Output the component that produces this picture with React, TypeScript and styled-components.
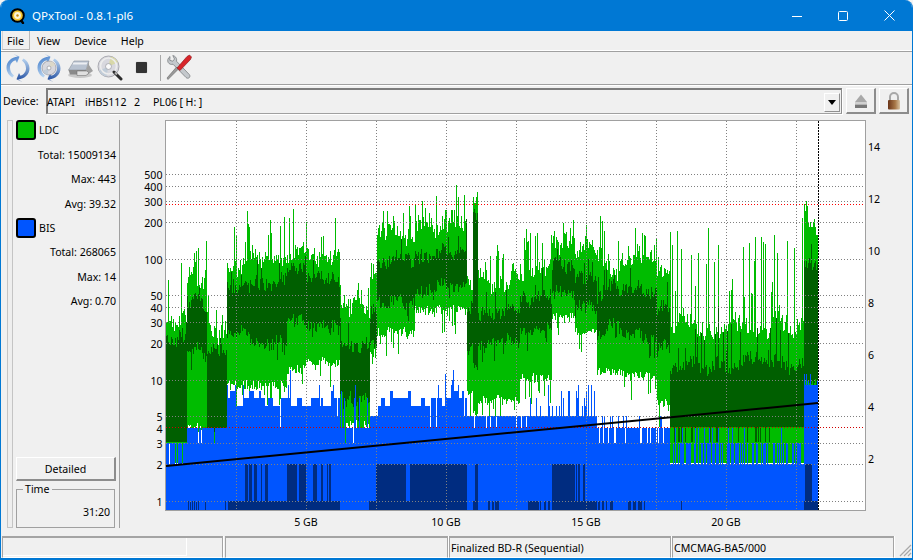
import React, { useMemo } from "react";
import styled, { createGlobalStyle } from "styled-components";

const Global = createGlobalStyle`
  html, body { margin: 0; padding: 0; background: #f4f4f4; overflow: hidden; }
  * { box-sizing: border-box; }
`;

const FONT = `"Noto Sans", "Liberation Sans", sans-serif`;

const Win = styled.div`
  width: 913px; height: 560px; display: flex; flex-direction: column;
  background: #f0f0f0; border: 1px solid #0078d4; border-top: 0; border-bottom-width: 2px;
  border-radius: 8px 8px 0 0; overflow: hidden;
  font: 10.6px/14px ${FONT}; color: #000;
`;
const TitleBar = styled.div`
  height: 31px; flex: none; background: #0078d4; display: flex; align-items: center; padding-left: 9px; color: #fff;
`;
const TitleText = styled.span` margin-left: 6px; font-size: 11.6px; flex: 1; `;
const WinBtn = styled.div` width: 46px; height: 31px; display: flex; align-items: center; justify-content: center; `;
const MenuBar = styled.div`
  height: 21px; flex: none; display: flex; padding-left: 1px; border-bottom: 1px solid #a0a0a0; box-shadow: inset 0 -1px 0 #fff; padding-bottom: 2px;
`;
const Menu = styled.div<{ $on?: boolean; $pr?: number }>`
  height: 19px; padding: 3px ${p => p.$pr ?? 6}px 0 ${p => (p.$on ? 4 : 6)}px; margin-right: ${p => (p.$on ? 1 : 0)}px;
  border: ${p => (p.$on ? "1px solid #d4d4d4" : "0")}; border-top: 0;
  border-right-color: #b8b8b8; border-bottom-color: #b8b8b8;
`;
const ToolBar = styled.div`
  height: 33px; flex: none; display: flex; align-items: center; padding: 0 0 1px 1px; border-bottom: 1px solid #a0a0a0;
`;
const ToolBtn = styled.div<{ $w?: number }>`
  width: ${p => p.$w ?? 31}px; height: 31px; display: flex; align-items: center; justify-content: center;
`;
const Sep = styled.div` width: 1px; height: 26px; background: #a8a8a8; margin: 0 2px 0 3px; `;
const DeviceRow = styled.div`
  height: 32px; flex: none; display: flex; gap: 3px; padding: 2px 3px 0 2px; border-top: 1px solid #fff;
`;
const DevLabel = styled.div` width: 40px; height: 25px; line-height: 27px; `;
const Combo = styled.div`
  width: 800px; margin-right: 1px; height: 26px; display: flex; align-items: center; justify-content: space-between;
  border-top: 2px solid #7c7c7c; border-left: 2px solid #7c7c7c; border-right: 1px solid #8c8c8c; border-bottom: 1px solid #a0a0a0;
  box-shadow: 1px 1px 0 #fff; padding: 1px 1px 0 0; white-space: pre;
`;
const ComboText = styled.span` margin-left: -1px; word-spacing: -0.2px; `;
const ComboArrow = styled.div`
  width: 16px; height: 19px; margin-top: 1px; display: flex; align-items: center; justify-content: center;
  border-top: 1px solid #fff; border-left: 1px solid #fff; border-right: 1px solid #909090; border-bottom: 1px solid #909090;
`;
const RaisedBtn = styled.div`
  width: 30px; height: 26px; display: flex; align-items: center; justify-content: center;
  border-top: 1px solid #fff; border-left: 1px solid #fff; border-right: 2px solid #8c8c8c; border-bottom: 2px solid #8c8c8c;
`;
const Main = styled.div` height: 419px; flex: none; display: flex; `;
const Side = styled.div` width: 119px; flex: none; display: flex; padding: 3px 0 8px 6px; `;
const Handle = styled.div` width: 6px; flex: none; border: 1px solid #c4c4c4; background: #eeeeee; `;
const Stats = styled.div`
  flex: 1; display: flex; flex-direction: column; padding: 0 3px 0 3px; border-right: 1px solid #a0a0a0;
`;
const Legend = styled.div<{ $mt?: number }>`
  height: 20px; display: flex; align-items: center; gap: 3px; margin-top: ${p => p.$mt ?? 0}px; margin-bottom: 2.7px;
`;
const Swatch = styled.div<{ $c: string }>`
  width: 20px; height: 20px; border-radius: 3px; border: 2px solid #000; background: ${p => p.$c};
`;
const StatRow = styled.div` height: 24.5px; line-height: 24.5px; text-align: right; `;
const Detailed = styled.div`
  margin-top: auto; height: 24px; width: 100px; display: flex; align-items: center; justify-content: center;
  border-top: 1px solid #fff; border-left: 1px solid #fff; border-right: 2px solid #8c8c8c; border-bottom: 2px solid #8c8c8c;
`;
const TimeBox = styled.fieldset`
  margin: 1px 0 0; padding: 0 4px 0 0; width: 99px; height: 46px; border: 1px solid #a0a0a0; text-align: right;
  font-family: inherit;
`;
const TimeLegend = styled.legend` margin-left: 6px; padding: 0 2px; text-align: left; line-height: 14px; `;
const TimeVal = styled.div` margin-top: 9px; `;
const ChartSvg = styled.svg` width: 792px; height: 419px; flex: none; display: block; `;
const StatusBar = styled.div` height: 22px; flex: none; display: flex; padding-left: 1px; `;
const Sunken = styled.div<{ $w: number; $ml?: number }>`
  width: ${p => p.$w}px; margin-left: ${p => p.$ml ?? 0}px; height: 22px; padding: 2px 0 0 1px; white-space: nowrap;
  border-top: 2px solid #a4a4a4; border-left: 1px solid #a4a4a4; border-right: 1px solid #a4a4a4; border-bottom: 1px solid #fff;
  line-height: 17px; display: flex; box-shadow: 1px 0 0 #fff;
`;
const Progress = styled.div` width: 184px; height: 18px; margin: -2px 0 0 -1px; border-right: 1px solid #fff; border-bottom: 1px solid #fff; `;
const Grip = styled.svg` margin: 6px 0 0 3px; width: 15px; height: 15px; flex: none; `;

/* ---------- chart data ---------- */
type Seg = [number, number, number, number, number, number, number];
// x end, green top, green bottom, dark top, dark bottom, blue value, spike
const SEGS: Seg[] = [
  [178, 322, 463, 342, 442, 3, 55],
  [187, 316, 463, 336, 442, 3, 70],
  [207, 272, 427, 303, 352, 4, 38],
  [227, 318, 440, 348, 432, 4, 35],
  [250, 262, 385, 288, 335, 7, 45],
  [287, 256, 385, 280, 340, 7, 45],
  [305, 244, 370, 268, 320, 7, 45],
  [340, 252, 362, 280, 328, 7, 32],
  [370, 308, 425, 346, 400, 4, 26],
  [377, 265, 350, 312, 346, 5, 28],
  [415, 233, 332, 262, 303, 7, 35],
  [467, 222, 310, 250, 285, 7, 35],
  [473, 282, 395, 308, 350, 5, 10],
  [478, 194, 412, 214, 365, 5, 5],
  [520, 278, 400, 312, 342, 5, 45],
  [552, 272, 378, 298, 332, 5, 38],
  [575, 243, 317, 263, 292, 5, 22],
  [597, 253, 333, 273, 303, 5, 22],
  [622, 260, 372, 295, 333, 4, 35],
  [657, 260, 376, 287, 333, 4, 26],
  [670, 273, 402, 305, 343, 4, 22],
  [804, 330, 463, 362, 427, 3, 105],
  [818, 226, 400, 265, 383, 10, 12],
];
const DB_MID: [number, number][] = [
  [245, 248], [249, 252], [254, 257], [261, 262], [265, 268], [287, 297], [299, 306], [313, 317], [321, 323], [327, 328], [329, 331],
  [376, 406], [410, 467], [475, 478], [552, 575], [576, 577], [578, 580], [583, 585], [805, 812],
];
const DB_LOW: [number, number][] = [
  [188, 189], [190, 191], [192, 193], [194, 195], [196, 197], [198, 199], [205, 206], [225, 226], [228, 340], [369, 467], [473, 478],
  [488, 490], [492, 494], [495, 499], [528, 539], [540, 541], [544, 546], [548, 550], [552, 597], [598, 600], [602, 604], [606, 607], [610, 613],
  [628, 631], [633, 636], [638, 642], [644, 645], [681, 682], [804, 818],
];
const yOf = (v: number) => Math.round(500.5 - 121 * Math.log10(v));

function buildChart() {
  let s = 1234567;
  const rnd = () => {
    s = (s + 0x6d2b79f5) | 0;
    let t = Math.imul(s ^ (s >>> 15), 1 | s);
    t = (t + Math.imul(t ^ (t >>> 7), 61 | t)) ^ t;
    return ((t ^ (t >>> 14)) >>> 0) / 4294967296;
  };
  const light: string[] = [], dark: string[] = [], blue: string[] = [], navy: string[] = [];
  let walkA = 0, walkB = 0, held = 7, hold = 0;
  for (let x = 166; x < 818; x++) {
    const seg = SEGS.find(g => x < g[0])!;
    const [, gT, gB, dT, dB, bv, spike] = seg;
    const wide = x >= 670 && x < 804;
    walkA = walkA * 0.88 + (rnd() - 0.5) * 9;
    walkB = walkB * 0.88 + (rnd() - 0.5) * 7;
    let top = gT + walkA + (rnd() - 0.5) * 16;
    if (rnd() < 0.2) top -= spike * (0.25 + 0.75 * rnd());
    let bot = gB + (rnd() - 0.5) * 10;
    if (rnd() < 0.22 && gB < 440) bot += rnd() * 26;
    let dTop = dT + walkB + (rnd() - 0.5) * 12;
    if (rnd() < (wide ? 0.14 : 0.12)) dTop -= (wide ? 75 : 26) * rnd();
    let dBot = dB + walkB * 0.8 + (rnd() - 0.5) * 12;
    if (rnd() < 0.12) dBot += 18 * rnd();
    if (gB >= 460) bot = x < 670 && rnd() < 0.3 ? 443 : 463;
    if (dB >= 427) dBot = rnd() < 0.22 ? 442 : dB;
    light.push(`M${x}.5 ${Math.round(top)}V${Math.round(bot)}`);
    dark.push(`M${x}.5 ${Math.round(Math.max(dTop, top))}V${Math.round(dBot)}`);
    let v = bv;
    const r = rnd();
    if (bv === 3 && x >= 670) {
      v = r < 0.45 ? 2 : r < 0.9 ? 3 : 4;
    } else if (bv === 3) {
      v = r < 0.2 ? 2 : 3;
    } else if (bv === 7) {
      if (hold <= 0) {
        const q = rnd();
        held = q < 0.28 ? 6 : q < 0.56 ? 7 : q < 0.74 ? 8 : q < 0.84 ? 9 : q < 0.9 ? 10 + Math.floor(rnd() * 3) : q < 0.96 ? 5 : 4;
        hold = held <= 5 || held >= 9 ? 1 : 1 + Math.floor(rnd() * 5);
      }
      hold--;
      v = held;
    } else if (bv === 5) {
      if (x >= 528 && x < 597) {
        if (r < 0.25) v = 6 + Math.floor(rnd() * 4);
      } else if (r < 0.1) v = 4;
    } else if (bv === 4) {
      if (x >= 597) {
        if (r < 0.14) v = 3;
        else if (r < 0.3) v = 5;
      } else if (r < 0.07) v = 3;
      if (x >= 340 && x < 370 && rnd() < 0.12) v = 6 + Math.floor(rnd() * 4);
    } else if (bv === 10) {
      v = r < 0.2 ? 11 : r < 0.5 ? 10 : 9;
    }
    blue.push(`M${x}.5 ${yOf(v)}V510`);
  }
  DB_MID.forEach(([a, b]) => { for (let x = a; x < b; x++) navy.push(`M${x}.5 464V501`); });
  DB_LOW.forEach(([a, b]) => { for (let x = a; x < b; x++) navy.push(`M${x}.5 501V510`); });
  return { light: light.join(""), dark: dark.join(""), blue: blue.join(""), navy: navy.join("") };
}

const GRID_V = [1, 2, 3, 5, 10, 20, 30, 40, 50, 100, 200, 300, 400, 500];
const LEFT_TICKS = [1, 2, 3, 4, 5, 10, 20, 30, 40, 50, 100, 200, 300, 400, 500];
const RIGHT_TICKS: [string, number][] = [["14", 147], ["12", 199], ["10", 251], ["8", 303], ["6", 355], ["4", 407], ["2", 459]];
const X_TICKS: [string, number][] = [["5 GB", 306], ["10 GB", 446], ["15 GB", 586], ["20 GB", 726]];
const V_LINES = [236, 306, 376, 446, 516, 586, 656, 726, 796];

const Chart = () => {
  const d = useMemo(buildChart, []);
  return (
    <ChartSvg viewBox="120 117 792 419">
      <rect x="165.5" y="120.5" width="700" height="390" fill="#fff" stroke="#a0a0a0" />
      <line x1="165" x2="866" y1="510.5" y2="510.5" stroke="#a0a0a0" />
      <g shapeRendering="crispEdges" fill="none" strokeWidth="1">
        <path d={d.light} stroke="#00bc00" />
        <path d={d.dark} stroke="#005f00" />
        <path d={d.blue} stroke="#0055ff" />
        <path d={d.navy} stroke="#002c80" />
        {GRID_V.map(v => (
          <line key={v} x1="166" x2="865" y1={yOf(v) + 0.5} y2={yOf(v) + 0.5} stroke="#808080" strokeDasharray="1 2" />
        ))}
        {V_LINES.map(x => (
          <line key={x} x1={x + 0.5} x2={x + 0.5} y1="121" y2="510" stroke="#808080" strokeDasharray="1 2" />
        ))}
        <line x1="166" x2="865" y1="204.5" y2="204.5" stroke="#ff0000" strokeDasharray="1 2" />
        <line x1="166" x2="865" y1="427.5" y2="427.5" stroke="#d00000" strokeDasharray="1 2" />
        <line x1="818.5" x2="818.5" y1="121" y2="510" stroke="#000" strokeDasharray="2 1" />
      </g>
      <line x1="166" y1="466" x2="818" y2="403" stroke="#000" strokeWidth="2" />
      <g fontFamily={FONT} fontSize="10.6" fill="#000">
        <g textAnchor="end">
          {LEFT_TICKS.map(v => (
            <text key={v} x="162.5" y={yOf(v) + 4.5}>{v}</text>
          ))}
        </g>
        {RIGHT_TICKS.map(([t, y]) => (
          <text key={t} x="868" y={y + 4}>{t}</text>
        ))}
        <g textAnchor="middle">
          {X_TICKS.map(([t, x]) => (
            <text key={t} x={x} y="526">{t}</text>
          ))}
        </g>
      </g>
    </ChartSvg>
  );
};

/* ---------- icons ---------- */
const AppIcon = () => (
  <svg width="16" height="16" viewBox="0 0 16 16">
    <path d="M10 11l3 4" stroke="#000" strokeWidth="2.4" strokeLinecap="round" />
    <circle cx="7.5" cy="7.5" r="6.3" fill="#f4c430" stroke="#000" strokeWidth="2" />
    <circle cx="7.5" cy="7.5" r="3.4" fill="#fff6d8" />
    <circle cx="7.5" cy="7.5" r="1.2" fill="#c88a10" />
  </svg>
);
const Arcs = () => (
  <>
    <path d="M13 2.5C6 3.2 1.5 8 1.5 13.5c0 4.5 2.6 8 6 10l1.5-2C6.300 19.500 5 16.800 5 13.500 5 10 7.500 7.200 10.500 6.300L12 9l2.500-6.300L8.500 0z" fill="url(#lb)" />
    <path d="M13 25.500c7-.7 11.500-5.500 11.500-11 0-4.500-2.600-8-6-10l-1.500 2c2.700 2 4 4.700 4 8 0 3.500-2.500 6.300-5.500 7.200L14 19l-2.500 6.300 6 2.700z" fill="url(#db)" />
  </>
);
const GradDefs = () => (
  <defs>
    <linearGradient id="lb" x1="0" y1="0" x2="0.3" y2="1">
      <stop offset="0" stopColor="#2f6fc4" />
      <stop offset="1" stopColor="#b8d4f0" />
    </linearGradient>
    <linearGradient id="db" x1="0.6" y1="0" x2="0.5" y2="1">
      <stop offset="0" stopColor="#b8d4f0" />
      <stop offset="1" stopColor="#1d4a9e" />
    </linearGradient>
  </defs>
);
const RefreshIcon = () => (
  <svg width="26" height="28" viewBox="0 0 26 28"><GradDefs /><Arcs /></svg>
);
const Disc = ({ cx, cy, r, tint = "#dcd8c8" }: { cx: number; cy: number; r: number; tint?: string }) => (
  <>
    <circle cx={cx} cy={cy} r={r} fill="#d8d8de" stroke="#9a9aa2" strokeWidth="0.8" />
    <path d={`M${cx} ${cy}L${cx + r * 0.9} ${cy - r * 0.4}A${r} ${r} 0 0 0 ${cx + r * 0.2} ${cy - r * 0.95}z`} fill={tint} />
    <path d={`M${cx} ${cy}L${cx - r * 0.9} ${cy + r * 0.4}A${r} ${r} 0 0 0 ${cx - r * 0.2} ${cy + r * 0.95}z`} fill="#c0ccd8" />
    <circle cx={cx} cy={cy} r={r * 0.28} fill="#fafafa" stroke="#8a8a92" strokeWidth="0.6" />
  </>
);
const DiscRefreshIcon = () => (
  <svg width="26" height="28" viewBox="0 0 26 28">
    <Arcs />
    <Disc cx={13} cy={14} r={7} />
  </svg>
);
const DriveIcon = () => (
  <svg width="26" height="24" viewBox="0 0 26 24">
    <ellipse cx="13" cy="19" rx="12" ry="3" fill="#c8c8c8" />
    <path d="M1.500 14L7 5h15l-3 9z" fill="#b8c2d0" stroke="#8a929c" strokeWidth="0.6" />
    <path d="M6.500 6.500h14l-1 2H5.500z" fill="#eceef2" />
    <path d="M1.500 14h17.500l-.5 4.500H3z" fill="#8a8a8a" />
    <path d="M19 14l3-9v4l4 6-6 4z" fill="#a0a0a0" />
    <path d="M10 15h10l2 2-3 2.500H10z" fill="#e0e0e0" stroke="#666" strokeWidth="0.5" />
  </svg>
);
const ScanIcon = () => (
  <svg width="26" height="26" viewBox="0 0 26 26">
    <Disc cx={11.500} cy={11.500} r={10.500} tint="#d8d8a8" />
    <circle cx="11.500" cy="11" r="8" fill="none" stroke="#ececec" strokeWidth="1.600" />
    <path d="M17 17l7 7" stroke="#2c2c2c" strokeWidth="3" strokeLinecap="round" />
    <path d="M18 17.500l2 2" stroke="#b0b0b0" strokeWidth="2" />
  </svg>
);
const ScanSlot = styled(ToolBtn)` margin: 0 1px 0 -1px; `;
const StopIcon = styled.div` width: 11px; height: 11px; background: #333; border-radius: 1px; box-shadow: 0 0 1px #888; `;
const ToolsIcon = () => (
  <svg width="27" height="27" viewBox="0 0 27 27">
    <path d="M4 2.500c-2 1.500-3 4-1.800 6 1 1.700 3 2.300 4.800 1.700L20 23.500c1 1 2.500 1 3.300.1.900-.9.800-2.300-.1-3.200L10.500 7.200c.5-1.900-.2-4-2-5L6.800 1.500 8.500 5 6.800 7.200 3.800 6.300z" fill="#c4c8cc" stroke="#6e7276" strokeWidth="0.7" />
    <path d="M2 25.500l-1-1.500 9.500-11 2 2z" fill="#9a9a9a" stroke="#555" strokeWidth="0.5" />
    <path d="M11 14l10-11.500 2.500-1.500 2 2-1 2.500L14 16.500z" fill="#d8252a" stroke="#8a1216" strokeWidth="0.6" />
  </svg>
);
const EjectIcon = () => (
  <svg width="16" height="16" viewBox="0 0 16 16">
    <path d="M8 1.500L14 9H2z" fill="#a8a8a8" />
    <path d="M2 9h12v2H2z" fill="#d0d0d0" />
    <rect x="2" y="11.500" width="12" height="3.500" fill="#777" />
  </svg>
);
const LockIcon = () => (
  <svg width="14" height="18" viewBox="0 0 14 18">
    <path d="M3 8V5a4 4 0 0 1 8 0v3" fill="none" stroke="#a8a8a8" strokeWidth="2" />
    <defs>
      <linearGradient id="lk" x1="0" x2="1" y1="0" y2="0">
        <stop offset="0" stopColor="#6a3418" />
        <stop offset="0.6" stopColor="#a87848" />
        <stop offset="1" stopColor="#d8c4a4" />
      </linearGradient>
    </defs>
    <rect x="1" y="8" width="12" height="9.500" rx="1" fill="url(#lk)" />
  </svg>
);

export default function App() {
  return (
    <>
      <Global />
      <Win>
        <TitleBar>
          <AppIcon />
          <TitleText>QPxTool - 0.8.1-pl6</TitleText>
          <WinBtn>
            <svg width="10" height="10" viewBox="0 0 10 10"><path d="M0 5.500h10" stroke="#fff" /></svg>
          </WinBtn>
          <WinBtn>
            <svg width="10" height="10" viewBox="0 0 10 10"><rect x=".5" y=".5" width="9" height="9" rx="1" fill="none" stroke="#fff" /></svg>
          </WinBtn>
          <WinBtn>
            <svg width="11" height="11" viewBox="0 0 11 11"><path d="M.5.500l10 10M10.500.500l-10 10" stroke="#fff" /></svg>
          </WinBtn>
        </TitleBar>
        <MenuBar>
          <Menu $on $pr={5}>File</Menu>
          <Menu $pr={8}>View</Menu>
          <Menu $pr={8}>Device</Menu>
          <Menu>Help</Menu>
        </MenuBar>
        <ToolBar>
          <ToolBtn><RefreshIcon /></ToolBtn>
          <ToolBtn><DiscRefreshIcon /></ToolBtn>
          <ToolBtn><DriveIcon /></ToolBtn>
          <ScanSlot><ScanIcon /></ScanSlot>
          <ToolBtn><StopIcon /></ToolBtn>
          <Sep />
          <ToolBtn $w={32}><ToolsIcon /></ToolBtn>
        </ToolBar>
        <DeviceRow>
          <DevLabel>Device:</DevLabel>
          <Combo>
            <ComboText>ATAPI    iHBS112   2     PL06 [ H: ]</ComboText>
            <ComboArrow>
              <svg width="8" height="5" viewBox="0 0 8 5"><path d="M0 0h8L4 5z" fill="#000" /></svg>
            </ComboArrow>
          </Combo>
          <RaisedBtn><EjectIcon /></RaisedBtn>
          <RaisedBtn><LockIcon /></RaisedBtn>
        </DeviceRow>
        <Main>
          <Side>
            <Handle />
            <Stats>
              <Legend><Swatch $c="#00bc00" />LDC</Legend>
              <StatRow>Total: 15009134</StatRow>
              <StatRow>Max: 443</StatRow>
              <StatRow>Avg: 39.32</StatRow>
              <Legend $mt={1.5}><Swatch $c="#0055ff" />BIS</Legend>
              <StatRow>Total: 268065</StatRow>
              <StatRow>Max: 14</StatRow>
              <StatRow>Avg: 0.70</StatRow>
              <Detailed>Detailed</Detailed>
              <TimeBox>
                <TimeLegend>Time</TimeLegend>
                <TimeVal>31:20</TimeVal>
              </TimeBox>
            </Stats>
          </Side>
          <Chart />
        </Main>
        <StatusBar>
          <Sunken $w={221}><Progress /></Sunken>
          <Sunken $w={223} $ml={2} />
          <Sunken $w={222} $ml={1}>Finalized BD-R (Sequential)</Sunken>
          <Sunken $w={222} $ml={1}>CMCMAG-BA5/000</Sunken>
          <Grip viewBox="0 0 15 15">
            <path d="M14 3L3 14M14 7L7 14M14 11l-3 3" stroke="#a8a8a8" strokeWidth="1.200" />
          </Grip>
        </StatusBar>
      </Win>
    </>
  );
}
